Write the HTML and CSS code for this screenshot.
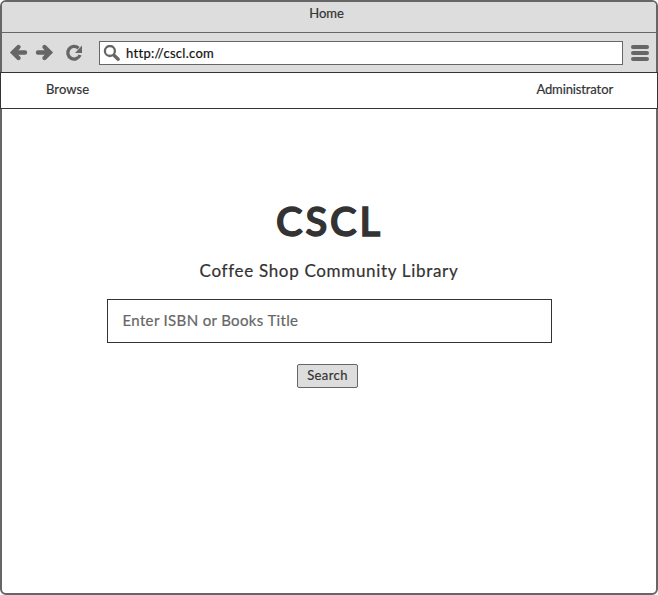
FILE: index.html
```html
<!DOCTYPE html>
<html lang="en">
<head>
<meta charset="utf-8">
<title>Home</title>
<link rel="stylesheet" href="styles.css">
</head>
<body>
<div class="window">
  <div class="titlebar"><span class="t-home">Home</span></div>
  <div class="toolbar">
    <svg class="controls" width="96" height="38" viewBox="2 33 96 38">
      <g fill="none" stroke="#666" stroke-width="4.4" stroke-linecap="round">
        <path d="M14 52.500H25M18.500 47L13 52.500L18.500 58" stroke-linejoin="miter"/>
        <path d="M38 52.500H49M44.500 47L50 52.500L44.500 58" stroke-linejoin="miter"/>
        <path d="M78.500 48.200A6.300 6.300 0 1 0 80 55" stroke-width="3.300" stroke-linecap="butt"/>
      </g>
      <path d="M82 45.500V53H75Z" fill="#666"/>
    </svg>
    <div class="address">
      <svg class="lens" width="18" height="18" viewBox="103 44 18 18" fill="none" stroke="#666">
        <circle cx="109.900" cy="50" r="5" stroke-width="2.300"/>
        <path d="M114 54.300L118.200 58.200" stroke-width="3.400" stroke-linecap="round"/>
      </svg>
      <span class="t-url">http://cscl.com</span>
    </div>
    <div class="menu"><i></i><i></i><i></i></div>
  </div>
  <nav class="nav"><span class="t-browse">Browse</span><span class="t-admin">Administrator</span></nav>
  <main class="main">
    <h1>CSCL</h1>
    <p class="subtitle">Coffee Shop Community Library</p>
    <div class="field"><span class="t-field">Enter ISBN or Books Title</span></div>
    <div class="button"><span class="t-search">Search</span></div>
  </main>
</div>
</body>
</html>
```
FILE: styles.css
```css
* { box-sizing: border-box; }
body {
  margin: 0;
  background: #fff;
  color: #333;
  font: 400 13px/16px Lato, "Liberation Sans", sans-serif;
  -webkit-text-stroke: 0.2px currentColor;
}
span, h1, p { white-space: nowrap; }
.window {
  width: 658px;
  height: 595px;
  border: 2px solid #666;
  border-radius: 6px;
  background: #fff;
}
.titlebar {
  height: 31px;
  padding: 3px 5px 0 0;
  text-align: center;
  background: #ddd;
  border-bottom: 1px solid #666;
  border-radius: 4px 4px 0 0;
}
.toolbar {
  display: flex;
  height: 39px;
  background: #ddd;
}
.controls { flex: none; }
.address {
  display: flex;
  width: 524px;
  height: 24px;
  margin: 8px 8px 0 1px;
  padding: 3px;
  border: 1px solid #666;
  background: #fff;
}
.t-url { margin-left: 5px; color: #111; letter-spacing: 0.3px; }
.menu {
  display: flex;
  flex-direction: column;
  gap: 2px;
  width: 18px;
  margin-top: 12px;
}
.menu i { height: 4px; border-radius: 2px; background: #666; }
.nav {
  display: flex;
  justify-content: space-between;
  height: 37px;
  margin: 0 -2px;
  padding: 8px 44px 0 45px;
  border: 1px solid #333;
  background: #fff;
}
.t-browse { letter-spacing: 0.1px; }
.t-admin { letter-spacing: -0.12px; }
.main {
  display: flex;
  flex-direction: column;
  align-items: center;
  padding-top: 86px;
}
h1 {
  margin: 0;
  padding-left: 1px;
  font-size: 40px;
  line-height: 52px;
  font-weight: 600;
  letter-spacing: 2.8px;
  -webkit-text-stroke: 1.4px currentColor;
}
.subtitle {
  margin: 13px 0 0;
  font-size: 17px;
  line-height: 22px;
  letter-spacing: 0.68px;
}
.field {
  width: 445px;
  height: 44px;
  margin-top: 17px;
  padding: 11px 15px;
  border: 1px solid #333;
  color: #666;
  font-size: 15px;
  line-height: 18px;
  letter-spacing: 0.35px;
}
.button {
  width: 61px;
  height: 24px;
  margin: 21px 3px 0 0;
  padding-top: 2px;
  border: 1px solid #666;
  border-radius: 2px;
  background: #ddd;
  text-align: center;
  letter-spacing: 0.4px;
}
```
